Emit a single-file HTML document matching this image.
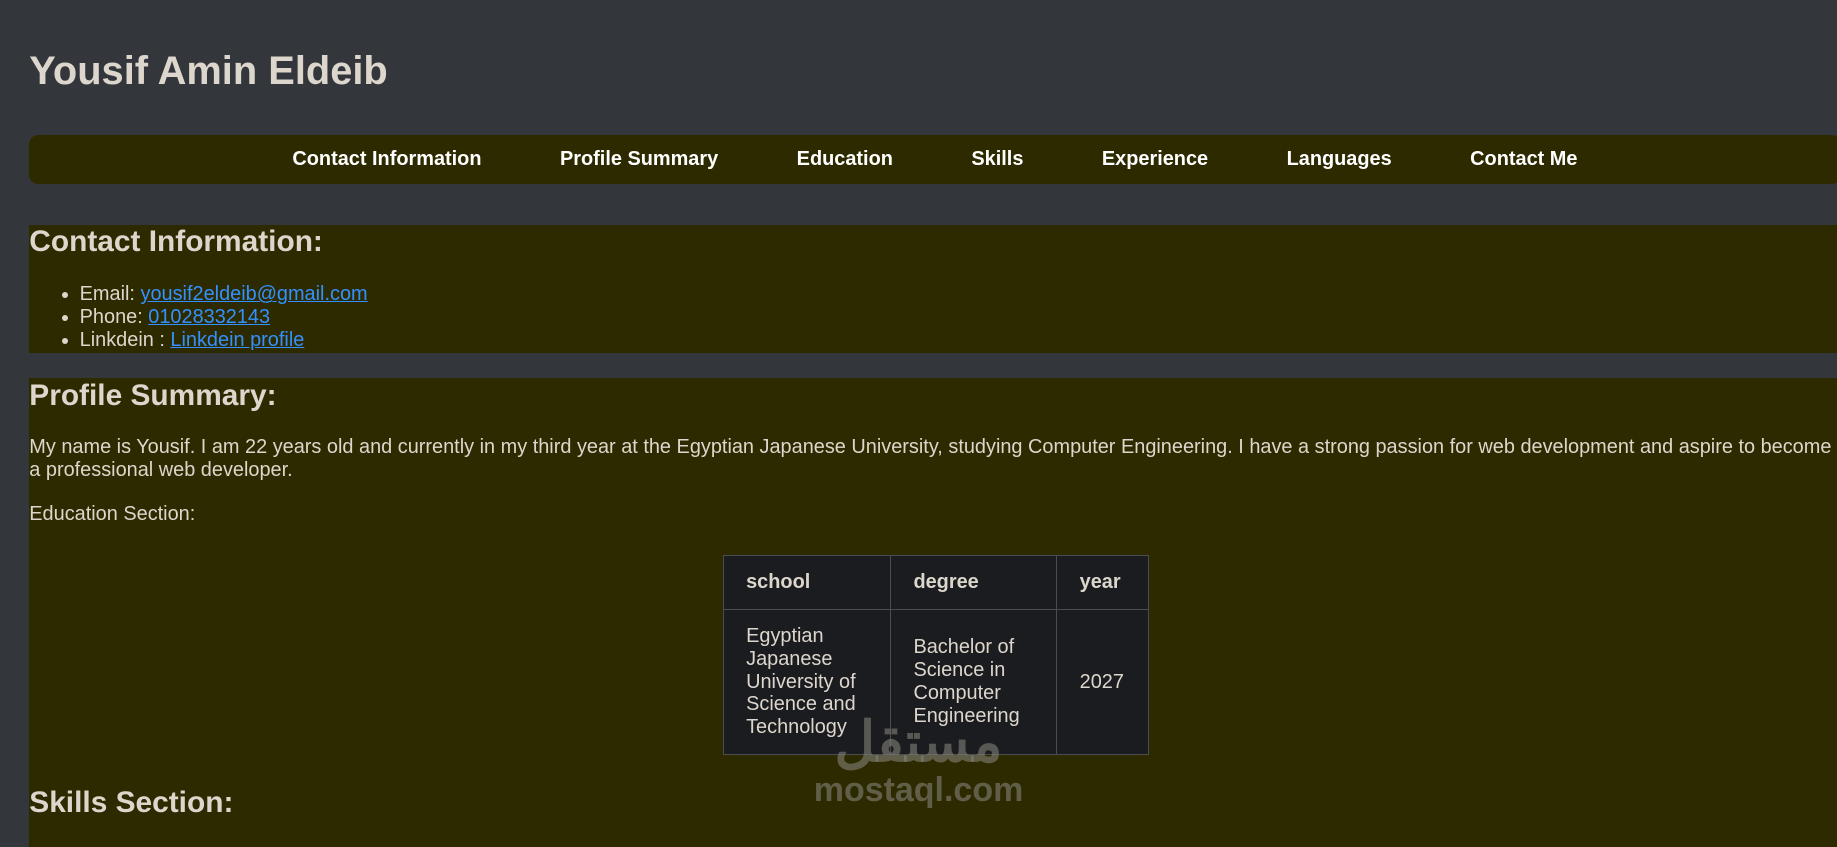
<!DOCTYPE html>
<html><head><meta charset="utf-8"><style>
html{zoom:1.1716;}
body{margin:0;background:#33363b;color:#ddd6cc;font-family:"Liberation Sans",Arial,sans-serif;font-size:17px;width:1568px;height:710px;overflow:hidden;position:relative;}
.wrap{padding-left:25px;}
h1{font-size:34px;margin:0;padding-top:43px;line-height:37px;height:72px;}
nav{width:1546px;height:42px;background:#2e2a00;border-radius:8px;display:flex;justify-content:center;align-items:center;gap:67px;font-weight:bold;color:#fff;font-size:17px;}
section{background:#2e2a00;width:1560px;}
h2{font-size:25.5px;margin:0;line-height:28px;padding-top:1px;}
ul{margin:21px 0 0;padding-left:43px;}
li{line-height:19.5px;}
a{color:#3391ff;text-decoration:underline;}
p{margin:0;line-height:20px;}
table{border-collapse:collapse;background:#1b1c1f;margin:25px 0 0 592px;}
td,th{border:1px solid #4a4d52;padding:0 19px;text-align:left;line-height:19.5px;}
th{height:45px;}
td{height:123px;}
</style></head><body><div class="wrap">
<h1>Yousif Amin Eldeib</h1>
<nav><span>Contact Information</span><span>Profile Summary</span><span>Education</span><span>Skills</span><span>Experience</span><span>Languages</span><span>Contact Me</span></nav>
<section style="margin-top:35px;height:109px;">
<h2>Contact Information:</h2>
<ul style="margin-top:21px"><li>Email: <a>yousif2eldeib@gmail.com</a></li><li>Phone: <a>01028332143</a></li><li>Linkdein : <a>Linkdein profile</a></li></ul>
</section>
<section style="margin-top:22px;height:400px;">
<h2>Profile Summary:</h2>
<p style="margin-top:20px;white-space:nowrap;">My name is Yousif. I am 22 years old and currently in my third year at the Egyptian Japanese University, studying Computer Engineering. I have a strong passion for web development and aspire to become<br>a professional web developer.</p>
<p style="margin-top:17px;">Education Section:</p>
<table><tr><th style="width:104px">school</th><th style="width:103px">degree</th><th style="width:39px">year</th></tr>
<tr><td>Egyptian Japanese University of Science and Technology</td><td>Bachelor of Science in Computer Engineering</td><td>2027</td></tr></table>
<h2 style="margin-top:26px;">Skills Section:</h2>
</section>
</div>
<div style="position:absolute;left:690px;top:600px;width:188px;text-align:center;color:rgba(130,130,120,0.6);font-weight:bold;">
<div style="font-family:'Noto Sans CJK SC',sans-serif;font-size:48px;line-height:60px;">مستقل</div>
<div style="font-size:29px;line-height:30px;">mostaql.com</div></div>
</body></html>
